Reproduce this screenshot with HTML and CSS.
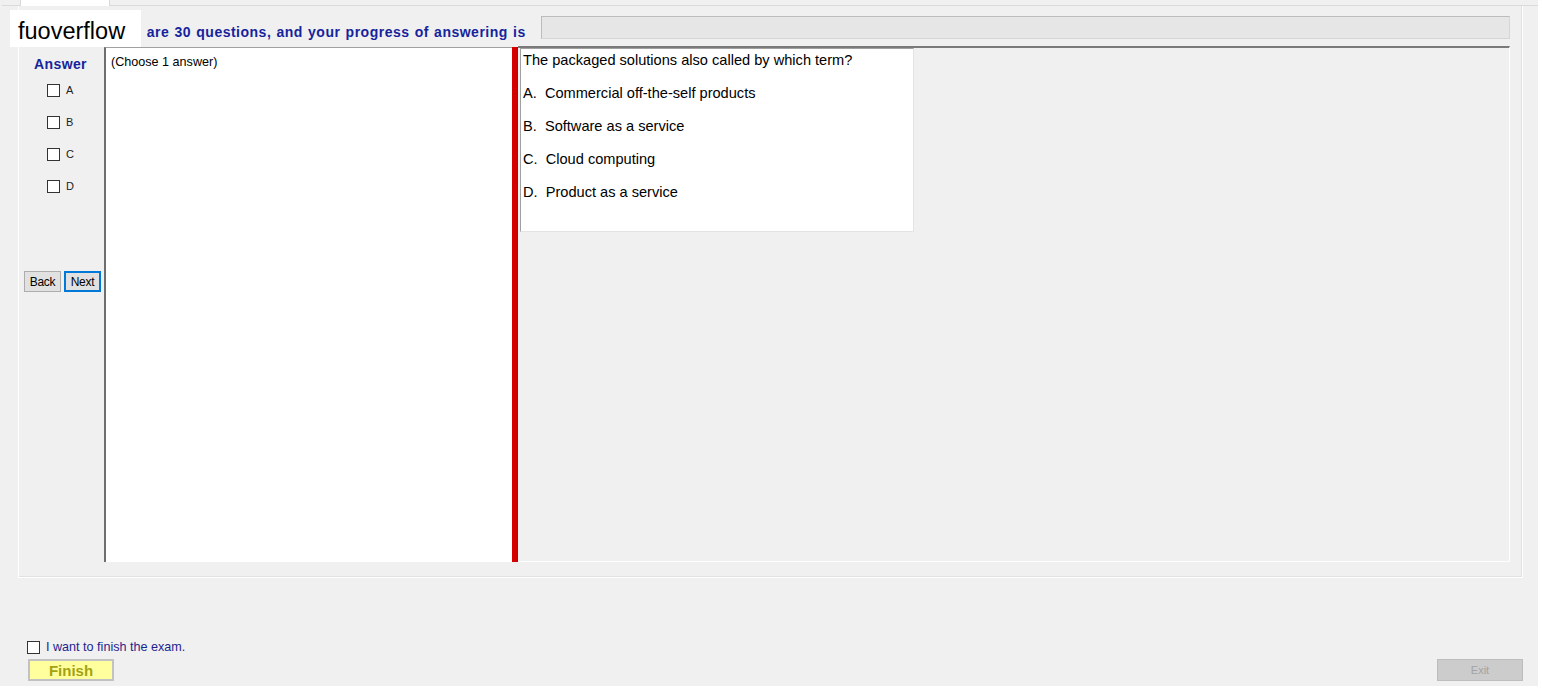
FILE: index.html
```html
<!doctype html>
<html>
<head>
  <meta charset="UTF-8">
  <link rel="stylesheet" href="styles.css">
</head>
<body>
  <div class="Window">
    <div class="Tabstrip">
      <div class="Tab"></div>
    </div>

    <div class="Tabpage">
      <div class="Head">
        <div class="Head-title">There are 30 questions, and your progress of answering is</div>
        <div class="Progress"></div>
      </div>

      <div class="Main">
        <div class="Answers">
          <div class="Answers-label">Answer</div>
          <label class="Choice"><span class="Check"></span>A</label>
          <label class="Choice"><span class="Check"></span>B</label>
          <label class="Choice"><span class="Check"></span>C</label>
          <label class="Choice"><span class="Check"></span>D</label>
          <div class="Nav">
            <button class="Btn">Back</button>
            <button class="Btn Btn-focus">Next</button>
          </div>
        </div>

        <div class="Notes">(Choose 1 answer)</div>
        <div class="Splitter"></div>

        <div class="Pane">
          <div class="Question">
            <div class="Question-text">The packaged solutions also called by which term?</div>
            <div class="Option">A.&nbsp; Commercial off-the-self products</div>
            <div class="Option">B.&nbsp; Software as a service</div>
            <div class="Option">C.&nbsp; Cloud computing</div>
            <div class="Option">D.&nbsp; Product as a service</div>
          </div>
        </div>
      </div>
    </div>

    <div class="Footer">
      <div class="Footer-left">
        <label class="Finish-check"><span class="Check"></span>I want to finish the exam.</label>
        <button class="Finish">Finish</button>
      </div>
      <button class="Exit">Exit</button>
    </div>

    <div class="Watermark">fuoverflow</div>
  </div>
</body>
</html>
```

FILE: styles.css
```css
:root {
  --face: #f0f0f0;
  --navy: #16249c;
  --edge-dark: #6e6e6e;
  --edge-mid: #a0a0a0;
}

html, body {
  margin: 0;
  background: #fff;
  font-family: 'Liberation Sans', Arial, Helvetica, sans-serif;
  font-size: 12px;
  color: #000;
}

.Window {
  position: relative;
  width: 1538px;
  height: 686px;
  background: var(--face);
  display: flex;
  flex-direction: column;
  box-sizing: border-box;
  padding-left: 2px;
}

.Tabstrip {
  height: 6px;
  padding-left: 18px;
  box-sizing: border-box;
  border-bottom: 1px solid #dadada;
}

.Tab {
  width: 90px;
  height: 6px;
  background: #fff;
  border: 1px solid #d9d9d9;
  border-top: none;
  border-bottom: none;
  box-sizing: border-box;
}

.Tabpage {
  margin: 0 15px 0 16px;
  height: 572px;
  box-sizing: border-box;
  padding: 3px 12px 13px 3px;
  border: 1px solid #fff;
  border-top: none;
  box-shadow: inset -1px -1px 0 #e2e2e2;
  display: flex;
  flex-direction: column;
}

.Head {
  height: 37px;
  display: flex;
  align-items: center;
}

.Head-title {
  width: 519px;
  box-sizing: border-box;
  padding-left: 79px;
  font-weight: bold;
  font-size: 14px;
  letter-spacing: 0.5px;
  word-spacing: 0.8px;
  color: var(--navy);
  white-space: nowrap;
  margin-top: 9px;
}

.Progress {
  flex: 1;
  height: 23px;
  background: #e6e6e6;
  border: 1px solid #bcbcbc;
  border-right-color: #d6d6d6;
  border-bottom-color: #d6d6d6;
  box-sizing: border-box;
  margin-top: -1px;
}

.Main {
  height: 516px;
  display: flex;
}

.Answers {
  width: 82px;
  display: flex;
  flex-direction: column;
}

.Answers-label {
  margin: 10px 0 0 12px;
  line-height: 16px;
  font-weight: bold;
  font-size: 14px;
  letter-spacing: 0.4px;
  color: var(--navy);
}

.Choice {
  height: 32px;
  display: flex;
  align-items: center;
  padding-left: 25px;
  font-size: 11px;
  color: #222;
}

.Choice:first-of-type {
  margin-top: 2px;
}

.Check {
  width: 13px;
  height: 13px;
  border: 1px solid #333;
  background: #fff;
  box-sizing: border-box;
  margin-right: 6px;
}

.Nav {
  margin: 69px 0 0 2px;
  display: flex;
  gap: 3px;
}

.Btn {
  width: 37px;
  height: 21px;
  padding: 0;
  font-family: inherit;
  font-size: 12px;
  letter-spacing: -0.3px;
  background: #e1e1e1;
  border: 1px solid #adadad;
  color: #000;
}

.Btn-focus {
  border: 2px solid #0078d7;
}

.Notes {
  width: 408px;
  margin-top: 1px;
  background: #fff;
  border-left: 2px solid var(--edge-dark);
  border-top: 1px solid var(--edge-mid);
  box-sizing: border-box;
  padding: 7px 5px;
  font-size: 12.6px;
  line-height: 14px;
}

.Splitter {
  width: 6px;
  margin-top: 1px;
  background: #d40000;
  box-shadow: inset -1px 0 0 #8a1a1a;
}

.Pane {
  flex: 1;
  border-top: 2px solid #7a7a7a;
  border-right: 1px solid #fff;
  border-bottom: 1px solid #fff;
  box-sizing: border-box;
  padding-left: 2px;
}

.Question {
  width: 394px;
  height: 184px;
  background: #fff;
  border-left: 1px solid var(--edge-mid);
  border-top: 1px solid var(--edge-mid);
  border-right: 1px solid #e4e4e4;
  border-bottom: 1px solid #e4e4e4;
  box-sizing: border-box;
  padding: 3px 0 0 2px;
  font-size: 14.6px;
  line-height: 16px;
}

.Option {
  margin-top: 17px;
}

.Footer {
  flex: 1;
  display: flex;
  justify-content: space-between;
  align-items: flex-end;
  padding: 0 15px 5px 25px;
}

.Footer-left {
  display: flex;
  flex-direction: column;
}

.Finish-check {
  display: flex;
  align-items: center;
  color: #1f1f8f;
  font-size: 12.6px;
  height: 16px;
}

.Finish-check .Check {
  margin-right: 6px;
  border-color: #333;
}

.Finish {
  margin: 4px 0 0 1px;
  width: 86px;
  height: 22px;
  padding: 0;
  background: #ffff9e;
  border: 2px solid #c2c2c2;
  font-family: inherit;
  font-weight: bold;
  font-size: 15px;
  color: #a3a312;
}

.Exit {
  width: 86px;
  height: 22px;
  padding: 0;
  background: #cccccc;
  border: 1px solid #bdbdbd;
  font-family: inherit;
  font-size: 11px;
  color: #a3a3a3;
}

.Watermark {
  position: absolute;
  left: 10px;
  top: 10px;
  width: 131px;
  height: 37px;
  background: #fff;
  box-sizing: border-box;
  padding: 8px 0 0 8px;
  font-size: 23.5px;
  line-height: 26px;
  color: #000;
}
```
